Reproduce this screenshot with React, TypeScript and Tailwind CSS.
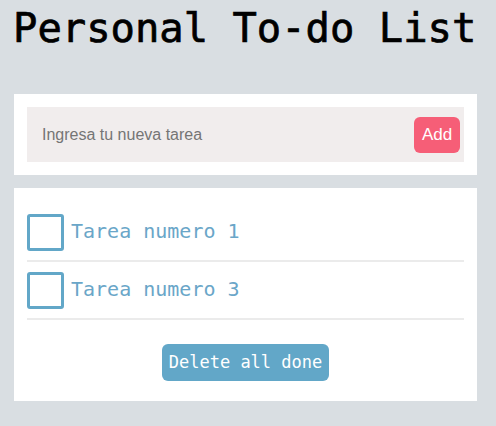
import React, { useState } from "react";

type Task = {
  id: number;
  text: string;
  done: boolean;
};

const mono = "font-['DejaVu_Sans_Mono',monospace]";

export default function App() {
  const [tasks, setTasks] = useState<Task[]>([
    { id: 1, text: "Tarea numero 1", done: false },
    { id: 3, text: "Tarea numero 3", done: false },
  ]);
  const [value, setValue] = useState("");

  const addTask = () => {
    if (!value.trim()) return;
    setTasks(prev => [...prev, { id: Date.now(), text: value.trim(), done: false }]);
    setValue("");
  };

  const toggle = (id: number) =>
    setTasks(prev => prev.map(t => (t.id === id ? { ...t, done: !t.done } : t)));

  return (
    <div className="min-h-[426px] w-full bg-[#d9dee2] pt-[4px]">
      <h1 className={`${mono} ml-[13px] text-[40.5px] leading-[48px] text-black [-webkit-text-stroke:0.7px_black]`}>
        Personal To-do List
      </h1>

      <div className="ml-[14px] mt-[42px] w-[463px] bg-white p-[13px]">
        <div className="flex h-[55px] items-center justify-between bg-[#f1eded] pl-[15px] pr-[4px]">
          <input
            value={value}
            onChange={e => setValue(e.target.value)}
            placeholder="Ingresa tu nueva tarea"
            className="w-full bg-transparent font-['Liberation_Sans',sans-serif] text-[16px] text-gray-700 outline-none placeholder:text-[#757575]"
          />
          <button
            type="button"
            onClick={addTask}
            className="h-[36px] w-[46px] shrink-0 rounded-[6px] bg-[#f65e77] font-['Liberation_Sans',sans-serif] text-[17px] text-white"
          >
            Add
          </button>
        </div>
      </div>

      <div className="ml-[14px] mt-[13px] w-[463px] bg-white px-[13px] pt-[16px] pb-[20px]">
        {tasks.map(t => (
          <div key={t.id} className="flex items-center gap-[7px] border-b-2 border-[#ebebeb] pt-[10px] pb-[9px]">
            <button
              type="button"
              onClick={() => toggle(t.id)}
              className="h-[37px] w-[37px] shrink-0 rounded-[3px] border-[3px] border-[#62a7c8] bg-white"
            />
            <span className={`${mono} -mt-[3px] text-[20px] text-[#6aa6c8] ${t.done ? "line-through" : ""}`}>{t.text}</span>
          </div>
        ))}
        <div className="mt-[24px] flex justify-center">
          <button
            type="button"
            onClick={() => setTasks(prev => prev.filter(t => !t.done))}
            className={`${mono} h-[37px] w-[167px] rounded-[6px] bg-[#62a7c8] text-[17px] text-white`}
          >
            Delete all done
          </button>
        </div>
      </div>
    </div>
  );
}
